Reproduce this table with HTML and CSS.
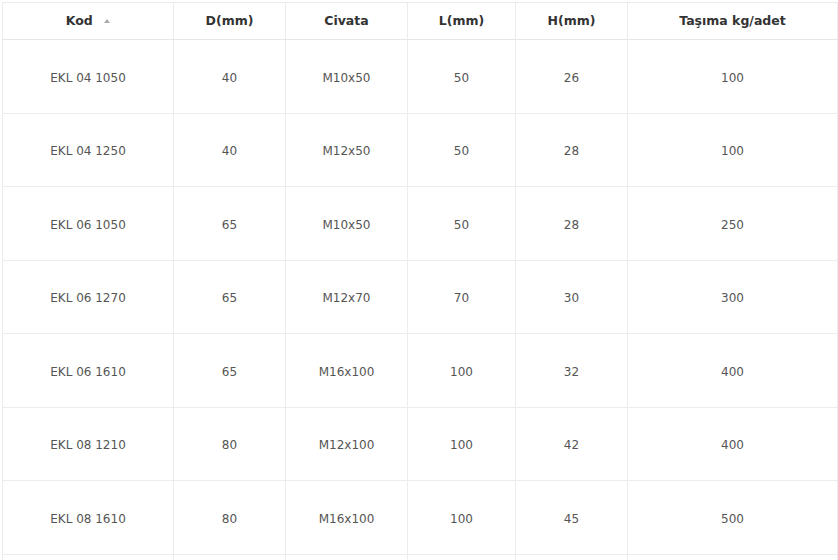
FILE: index.html
```html
<!DOCTYPE html>
<html>
<head>
<meta charset="utf-8">
<link rel="stylesheet" href="styles.css">
</head>
<body>
<div class="wrap">
<table class="grid">
<colgroup>
<col class="c1"><col class="c2"><col class="c3"><col class="c4"><col class="c5"><col class="c6">
</colgroup>
<thead>
<tr><th>Kod <span class="sort"></span></th><th>D(mm)</th><th>Civata</th><th>L(mm)</th><th>H(mm)</th><th>Taşıma kg/adet</th></tr>
</thead>
<tbody>
<tr><td>EKL 04 1050</td><td>40</td><td>M10x50</td><td>50</td><td>26</td><td>100</td></tr>
<tr><td>EKL 04 1250</td><td>40</td><td>M12x50</td><td>50</td><td>28</td><td>100</td></tr>
<tr><td>EKL 06 1050</td><td>65</td><td>M10x50</td><td>50</td><td>28</td><td>250</td></tr>
<tr><td>EKL 06 1270</td><td>65</td><td>M12x70</td><td>70</td><td>30</td><td>300</td></tr>
<tr><td>EKL 06 1610</td><td>65</td><td>M16x100</td><td>100</td><td>32</td><td>400</td></tr>
<tr><td>EKL 08 1210</td><td>80</td><td>M12x100</td><td>100</td><td>42</td><td>400</td></tr>
<tr><td>EKL 08 1610</td><td>80</td><td>M16x100</td><td>100</td><td>45</td><td>500</td></tr>
<tr class="last"><td></td><td></td><td></td><td></td><td></td><td></td></tr>
</tbody>
</table>
</div>
</body>
</html>
```
FILE: styles.css
```css
html, body {
  margin: 0;
  padding: 0;
  background: #fff;
  overflow: hidden;
}
.wrap {
  padding: 2px 0 0 2px;
}
.grid {
  border-collapse: collapse;
  table-layout: fixed;
  width: 835px;
  font-family: "DejaVu Sans", Verdana, sans-serif;
  font-size: 12px;
  color: #555;
}
.c1 { width: 171px; }
.c2 { width: 112px; }
.c3 { width: 122px; }
.c4 { width: 108px; }
.c5 { width: 112px; }
.c6 { width: 210px; }
.grid th, .grid td {
  border: 1px solid #ececec;
  text-align: center;
  padding: 0;
}
.grid th {
  height: 34px;
  font-weight: bold;
  font-size: 12.5px;
  color: #333;
  border-bottom: 1px solid #e6e6e6;
  box-shadow: 0 3px 3px -1px rgba(0,0,0,0.06);
  position: relative;
  padding-bottom: 2px;
}
.grid td {
  height: 69.5px;
  padding-top: 3px;
}
.sort {
  display: inline-block;
  width: 0;
  height: 0;
  border-left: 3.5px solid transparent;
  border-right: 3.5px solid transparent;
  border-bottom: 4px solid #aaa;
  margin-left: 7px;
  vertical-align: middle;
}
```
